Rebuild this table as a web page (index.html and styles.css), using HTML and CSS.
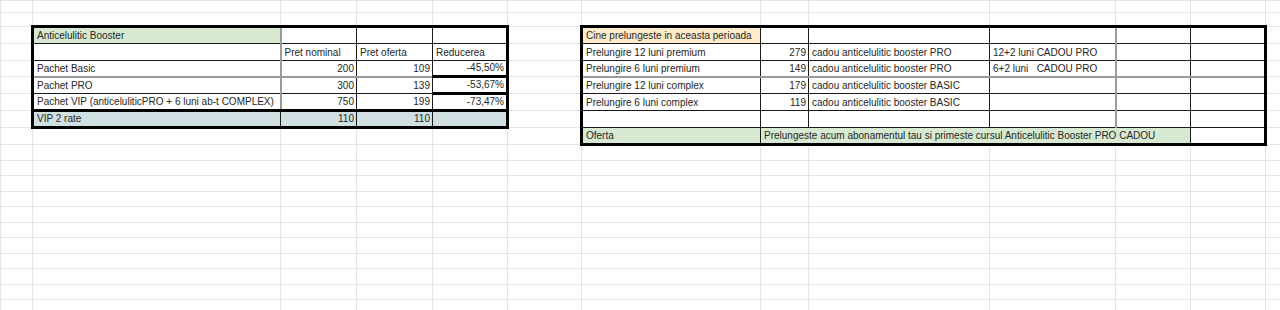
FILE: index.html
```html
<!DOCTYPE html>
<html lang="ro">
<head>
<meta charset="utf-8">
<title>Anticelulitic Booster</title>
<link rel="stylesheet" href="styles.css">
</head>
<body>
<table class="sheet">
  <colgroup>
    <col class="w32"><col class="w248"><col class="w76"><col class="w76"><col class="w75"><col class="w74">
    <col class="w179"><col class="w48"><col class="w181"><col class="w126"><col class="w75"><col class="w75"><col class="w15">
  </colgroup>
  <tbody>
    <tr class="h12"><td></td><td></td><td></td><td></td><td></td><td></td><td></td><td></td><td></td><td></td><td></td><td></td><td></td></tr>
    <tr class="h14"><td></td><td></td><td></td><td></td><td></td><td></td><td></td><td></td><td></td><td></td><td></td><td></td><td></td></tr>
    <tr class="h17">
      <td></td>
      <td class="c green top left">Anticelulitic Booster</td>
      <td class="c top gl"></td>
      <td class="c top"></td>
      <td class="c top right"></td>
      <td></td>
      <td class="c peach top left">Cine prelungeste in aceasta perioada</td>
      <td class="c top"></td>
      <td class="c top"></td>
      <td class="c top"></td>
      <td class="c top gl"></td>
      <td class="c top right"></td>
      <td></td>
    </tr>
    <tr class="h17">
      <td></td>
      <td class="c left"></td>
      <td class="c gl">Pret nominal</td>
      <td class="c">Pret oferta</td>
      <td class="c right">Reducerea</td>
      <td></td>
      <td class="c left">Prelungire 12 luni premium</td>
      <td class="c num">279</td>
      <td class="c">cadou anticelulitic booster PRO</td>
      <td class="c">12+2 luni CADOU PRO</td>
      <td class="c gl"></td>
      <td class="c right"></td>
      <td></td>
    </tr>
    <tr class="h16">
      <td></td>
      <td class="c left gb">Pachet Basic</td>
      <td class="c num gl gb">200</td>
      <td class="c num gb">109</td>
      <td class="c num right tb">-45,50%</td>
      <td></td>
      <td class="c left gb">Prelungire 6 luni premium</td>
      <td class="c num gb">149</td>
      <td class="c gb">cadou anticelulitic booster PRO</td>
      <td class="c pre gb">6+2 luni   CADOU PRO</td>
      <td class="c gl gb"></td>
      <td class="c right gb"></td>
      <td></td>
    </tr>
    <tr class="h17">
      <td></td>
      <td class="c left">Pachet PRO</td>
      <td class="c num gl">300</td>
      <td class="c num">139</td>
      <td class="c num right tb">-53,67%</td>
      <td></td>
      <td class="c left">Prelungire 12 luni complex</td>
      <td class="c num">179</td>
      <td class="c">cadou anticelulitic booster BASIC</td>
      <td class="c"></td>
      <td class="c gl"></td>
      <td class="c right"></td>
      <td></td>
    </tr>
    <tr class="h17">
      <td></td>
      <td class="c left tb">Pachet VIP (anticeluliticPRO + 6 luni ab-t COMPLEX)</td>
      <td class="c num gl tb">750</td>
      <td class="c num tb">199</td>
      <td class="c num right tb">-73,47%</td>
      <td></td>
      <td class="c left">Prelungire 6 luni complex</td>
      <td class="c num">119</td>
      <td class="c">cadou anticelulitic booster BASIC</td>
      <td class="c"></td>
      <td class="c gl"></td>
      <td class="c right"></td>
      <td></td>
    </tr>
    <tr class="h17">
      <td></td>
      <td class="c vip left bottom">VIP 2 rate</td>
      <td class="c vip num bottom">110</td>
      <td class="c vip num bottom">110</td>
      <td class="c vip right bottom"></td>
      <td></td>
      <td class="c left"></td>
      <td class="c"></td>
      <td class="c"></td>
      <td class="c"></td>
      <td class="c gl"></td>
      <td class="c right"></td>
      <td></td>
    </tr>
    <tr class="h17">
      <td></td><td></td><td></td><td></td><td></td><td></td>
      <td class="c green left bottom">Oferta</td>
      <td class="c green bottom" colspan="4">Prelungeste acum abonamentul tau si primeste cursul Anticelulitic Booster PRO CADOU</td>
      <td class="c right bottom"></td>
      <td></td>
    </tr>
    <tr class="h16"><td></td><td></td><td></td><td></td><td></td><td></td><td></td><td></td><td></td><td></td><td></td><td></td><td></td></tr>
    <tr class="h15"><td></td><td></td><td></td><td></td><td></td><td></td><td></td><td></td><td></td><td></td><td></td><td></td><td></td></tr>
    <tr class="h16"><td></td><td></td><td></td><td></td><td></td><td></td><td></td><td></td><td></td><td></td><td></td><td></td><td></td></tr>
    <tr class="h15"><td></td><td></td><td></td><td></td><td></td><td></td><td></td><td></td><td></td><td></td><td></td><td></td><td></td></tr>
    <tr class="h16"><td></td><td></td><td></td><td></td><td></td><td></td><td></td><td></td><td></td><td></td><td></td><td></td><td></td></tr>
    <tr class="h15"><td></td><td></td><td></td><td></td><td></td><td></td><td></td><td></td><td></td><td></td><td></td><td></td><td></td></tr>
    <tr class="h16"><td></td><td></td><td></td><td></td><td></td><td></td><td></td><td></td><td></td><td></td><td></td><td></td><td></td></tr>
    <tr class="h15"><td></td><td></td><td></td><td></td><td></td><td></td><td></td><td></td><td></td><td></td><td></td><td></td><td></td></tr>
    <tr class="h16"><td></td><td></td><td></td><td></td><td></td><td></td><td></td><td></td><td></td><td></td><td></td><td></td><td></td></tr>
    <tr class="h15"><td></td><td></td><td></td><td></td><td></td><td></td><td></td><td></td><td></td><td></td><td></td><td></td><td></td></tr>
    <tr class="h16"><td></td><td></td><td></td><td></td><td></td><td></td><td></td><td></td><td></td><td></td><td></td><td></td><td></td></tr>
  </tbody>
</table>
</body>
</html>
```

FILE: styles.css
```css
html, body {
  margin: 0;
  padding: 0;
  background: #ffffff;
}

body {
  font-family: "Liberation Sans", Arial, sans-serif;
  font-size: 10px;
  color: #262626;
  overflow: hidden;
}

.sheet {
  border-collapse: collapse;
  table-layout: fixed;
  width: 1280px;
}

.sheet td {
  border: 1px solid #e3e3e3;
  padding: 0 3px 1px 3px;
  white-space: nowrap;
  overflow: hidden;
  vertical-align: bottom;
  line-height: 13px;
}

/* column widths */
.w15 { width: 15px; }
.w32 { width: 32px; }
.w48 { width: 48px; }
.w74 { width: 74px; }
.w75 { width: 75px; }
.w76 { width: 76px; }
.w126 { width: 126px; }
.w179 { width: 179px; }
.w181 { width: 181px; }
.w248 { width: 248px; }

/* row heights */
.h12 { height: 12px; }
.h14 { height: 14px; }
.h15 { height: 15px; }
.h16 { height: 16px; }
.h17 { height: 17px; }

/* table cells */
.sheet td.c { border: 1px solid #1a1a1a; }
.sheet td.num { text-align: right; padding-right: 2px; }
.sheet td.pre { white-space: pre; }

/* grey (half-pixel) lines */
.sheet td.gl { border-left: 2px solid #9a9a9a; }
.sheet td.gb { border-bottom: 2px solid #9a9a9a; }

/* thick borders */
.sheet td.top { border-top: 3px solid #000; }
.sheet td.left { border-left: 3px solid #000; }
.sheet td.right { border-right: 3px solid #000; }
.sheet td.bottom { border-bottom: 3px solid #000; }
.sheet td.tb { border-bottom: 3px solid #000; }

/* fills */
.green { background: #d7e9d1; }
.peach { background: #fdebc9; }
.vip {
  background: #d0dfe2;
}
.sheet td.vip.num,
.sheet td.vip.right {
  border-left-color: #d0dfe2;
}
```
